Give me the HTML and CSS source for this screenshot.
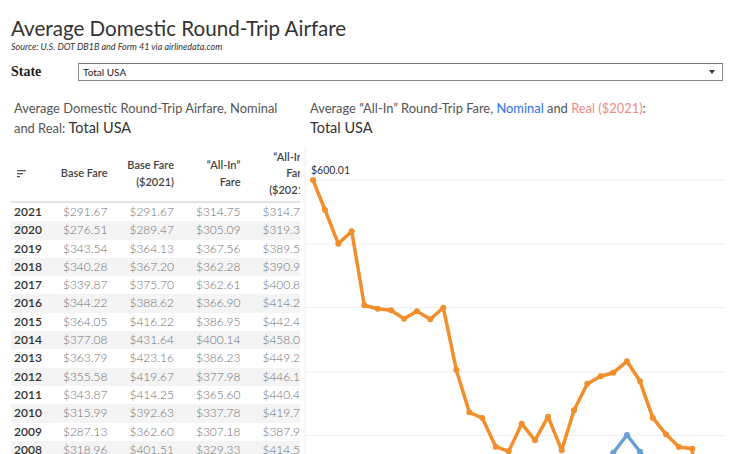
FILE: index.html
```html
<!DOCTYPE html>
<html lang="en">
<head>
<meta charset="utf-8">
<title>Average Domestic Round-Trip Airfare</title>
<link rel="stylesheet" href="styles.css">
</head>
<body>
<div class="page">
  <header class="head">
    <h1 class="title">Average Domestic Round-Trip Airfare</h1>
    <p class="source">Source: U.S. DOT DB1B and Form 41 via airlinedata.com</p>
    <div class="filter">
      <span class="filter-label">State</span>
      <div class="select"><span class="select-value">Total USA</span><span class="caret"></span></div>
    </div>
  </header>
  <main class="panels">
    <section class="left">
      <h2 class="sub">Average Domestic Round-Trip Airfare, Nominal<br>and Real: <span class="big">Total USA</span></h2>
      <table class="fares">
        <thead>
          <tr>
            <th class="c-year"><svg class="sort" width="10" height="8" viewBox="0 0 10 8"><rect x="0" y="0" width="9" height="1.3" fill="#555"/><rect x="0" y="3" width="6" height="1.3" fill="#555"/><rect x="0" y="6" width="3" height="1.3" fill="#555"/></svg></th>
            <th>Base Fare</th>
            <th>Base Fare<br>($2021)</th>
            <th>“All-In”<br>Fare</th>
            <th>“All-In”<br>Fare<br>($2021)</th>
          </tr>
        </thead>
        <tbody>
          <tr><td class="c-year">2021</td><td>$291.67</td><td>$291.67</td><td>$314.75</td><td>$314.75</td></tr>
          <tr><td class="c-year">2020</td><td>$276.51</td><td>$289.47</td><td>$305.09</td><td>$319.38</td></tr>
          <tr><td class="c-year">2019</td><td>$343.54</td><td>$364.13</td><td>$367.56</td><td>$389.57</td></tr>
          <tr><td class="c-year">2018</td><td>$340.28</td><td>$367.20</td><td>$362.28</td><td>$390.93</td></tr>
          <tr><td class="c-year">2017</td><td>$339.87</td><td>$375.70</td><td>$362.61</td><td>$400.83</td></tr>
          <tr><td class="c-year">2016</td><td>$344.22</td><td>$388.62</td><td>$366.90</td><td>$414.22</td></tr>
          <tr><td class="c-year">2015</td><td>$364.05</td><td>$416.22</td><td>$386.95</td><td>$442.41</td></tr>
          <tr><td class="c-year">2014</td><td>$377.08</td><td>$431.64</td><td>$400.14</td><td>$458.03</td></tr>
          <tr><td class="c-year">2013</td><td>$363.79</td><td>$423.16</td><td>$386.23</td><td>$449.27</td></tr>
          <tr><td class="c-year">2012</td><td>$355.58</td><td>$419.67</td><td>$377.98</td><td>$446.13</td></tr>
          <tr><td class="c-year">2011</td><td>$343.87</td><td>$414.25</td><td>$365.60</td><td>$440.47</td></tr>
          <tr><td class="c-year">2010</td><td>$315.99</td><td>$392.63</td><td>$337.78</td><td>$419.75</td></tr>
          <tr><td class="c-year">2009</td><td>$287.13</td><td>$362.60</td><td>$307.18</td><td>$387.92</td></tr>
          <tr><td class="c-year">2008</td><td>$318.96</td><td>$401.51</td><td>$329.33</td><td>$414.59</td></tr>
        </tbody>
      </table>
    </section>
    <section class="right">
      <h2 class="sub">Average “All-In” Round-Trip Fare, <span class="nominal">Nominal</span> and <span class="real">Real ($2021)</span>:<br><span class="big">Total USA</span></h2>
      <svg class="chart" width="436" height="320" viewBox="0 0 436 320">
        <line class="axis" x1="5" y1="5" x2="5" y2="320"/>
        <line class="grid" x1="5" y1="39" x2="425" y2="39"/>
        <line class="grid" x1="5" y1="103" x2="425" y2="103"/>
        <line class="grid" x1="5" y1="166.5" x2="425" y2="166.5"/>
        <line class="grid" x1="5" y1="231" x2="425" y2="231"/>
        <line class="grid" x1="5" y1="294.5" x2="425" y2="294.5"/>
        <text class="peak" x="11" y="33">$600.01</text>
        <polyline class="blue-line" points="296,336 313.3,311.7 327,294 340,310.7 356,332"/>
        <g class="blue-dots">
          <circle cx="313.3" cy="311.7" r="3"/><circle cx="327" cy="294" r="3"/><circle cx="340" cy="310.7" r="3"/>
        </g>
        <polyline class="orange-line" points="13,39 25,69 38.3,102.7 51.7,90.3 64.3,164.3 77.7,167.7 91,169.3 104,177.7 117,170.3 130.3,178.3 143.3,166.7 156.3,229 169.3,271.3 182.3,277 195.7,305.7 208.7,310.3 221.7,282.7 235,299.3 248,275.7 261.7,309.3 274,269.3 287.3,242.7 300.7,235.3 313.3,231.7 327,220.3 340,240.3 352.7,276.7 366,293.3 379,306 392.3,307.7 393,330"/>
        <g class="orange-dots">
          <circle cx="13" cy="39" r="3"/><circle cx="25" cy="69" r="3"/><circle cx="38.3" cy="102.7" r="3"/><circle cx="51.7" cy="90.3" r="3"/><circle cx="64.3" cy="164.3" r="3"/><circle cx="77.7" cy="167.7" r="3"/><circle cx="91" cy="169.3" r="3"/><circle cx="104" cy="177.7" r="3"/><circle cx="117" cy="170.3" r="3"/><circle cx="130.3" cy="178.3" r="3"/><circle cx="143.3" cy="166.7" r="3"/><circle cx="156.3" cy="229" r="3"/><circle cx="169.3" cy="271.3" r="3"/><circle cx="182.3" cy="277" r="3"/><circle cx="195.7" cy="305.7" r="3"/><circle cx="208.7" cy="310.3" r="3"/><circle cx="221.7" cy="282.7" r="3"/><circle cx="235" cy="299.3" r="3"/><circle cx="248" cy="275.7" r="3"/><circle cx="261.7" cy="309.3" r="3"/><circle cx="274" cy="269.3" r="3"/><circle cx="287.3" cy="242.7" r="3"/><circle cx="300.7" cy="235.3" r="3"/><circle cx="313.3" cy="231.7" r="3"/><circle cx="327" cy="220.3" r="3"/><circle cx="340" cy="240.3" r="3"/><circle cx="352.7" cy="276.7" r="3"/><circle cx="366" cy="293.3" r="3"/><circle cx="379" cy="306" r="3"/><circle cx="392.3" cy="307.7" r="3"/>
        </g>
      </svg>
    </section>
  </main>
</div>
</body>
</html>
```

FILE: styles.css
```css
* { box-sizing: border-box; }
html, body { margin: 0; padding: 0; background: #fff; }
body {
  width: 736px;
  height: 454px;
  overflow: hidden;
  font-family: Lato, "Open Sans", sans-serif;
  color: #333;
}
.page { width: 736px; }

.head { padding-left: 11px; }
.title {
  margin: 16px 0 0;
  font-size: 20.6px;
  line-height: 24px;
  font-weight: 400;
  color: #333;
}
.source {
  margin: 2px 0 0;
  font-size: 9px;
  line-height: 10px;
  font-style: italic;
  color: #333;
}
.filter {
  display: flex;
  align-items: center;
  margin-top: 11px;
  height: 18px;
}
.filter-label {
  width: 67px;
  font-family: "Liberation Serif", serif;
  font-weight: 700;
  font-size: 14px;
  color: #222;
}
.select {
  width: 645px;
  height: 18px;
  border: 1px solid #8a8a8a;
  border-top-color: #777;
  display: flex;
  align-items: center;
  justify-content: space-between;
  padding: 0 7px 0 4px;
}
.select-value { font-size: 10px; color: #222; }
.caret {
  width: 0; height: 0;
  border-left: 3.5px solid transparent;
  border-right: 3.5px solid transparent;
  border-top: 4px solid #333;
}

.panels {
  display: flex;
  margin-top: 18px;
}
.sub {
  margin: 0;
  font-size: 12.9px;
  line-height: 19px;
  font-weight: 400;
  color: #555;
}
.big { font-size: 14.5px; color: #333; }
.nominal { color: #2f6ff0; }
.real { color: #f08a84; }

.left {
  width: 300px;
  overflow: hidden;
  flex: none;
}
.left .sub { padding-left: 14px; }
.fares {
  margin: 8px 0 0 11px;
  border-collapse: collapse;
  table-layout: fixed;
  width: 295px;
}
.fares th, .fares td {
  width: 66.5px;
  text-align: right;
  padding: 0;
  white-space: nowrap;
  overflow: visible;
}
.fares .c-year {
  width: 30px;
  text-align: left;
  padding-left: 3px;
}
.fares thead th {
  height: 56px;
  font-size: 11px;
  line-height: 16.5px;
  font-weight: 600;
  color: #444;
  vertical-align: middle;
  border-bottom: 2px solid #e2e2e2;
}
.fares thead th.c-year { padding-left: 6px; }
.sort { display: block; }
.fares tbody td {
  height: 18.3px;
  font-size: 12px;
  line-height: 18.3px;
  color: #707070;
  font-weight: 300;
  background: #fff;
}
.fares tbody td.c-year { color: #333; font-weight: 600; }
.fares tbody tr:nth-child(even) td { background: #f4f4f4; }

.right { flex: 1; }
.right .sub { padding-left: 10px; }
.chart { display: block; margin-top: 2.5px; }
.axis { stroke: #eeeeee; stroke-width: 1; }
.grid { stroke: #f0f0f0; stroke-width: 1; }
.peak { font-family: Lato, sans-serif; font-size: 10.5px; fill: #333; }
.orange-line { fill: none; stroke: #f28e2b; stroke-width: 3.5; stroke-linejoin: round; }
.orange-dots circle { fill: #f28e2b; }
.blue-line { fill: none; stroke: #6b9ed4; stroke-width: 3.5; stroke-linejoin: round; }
.blue-dots circle { fill: #6b9ed4; }
```
